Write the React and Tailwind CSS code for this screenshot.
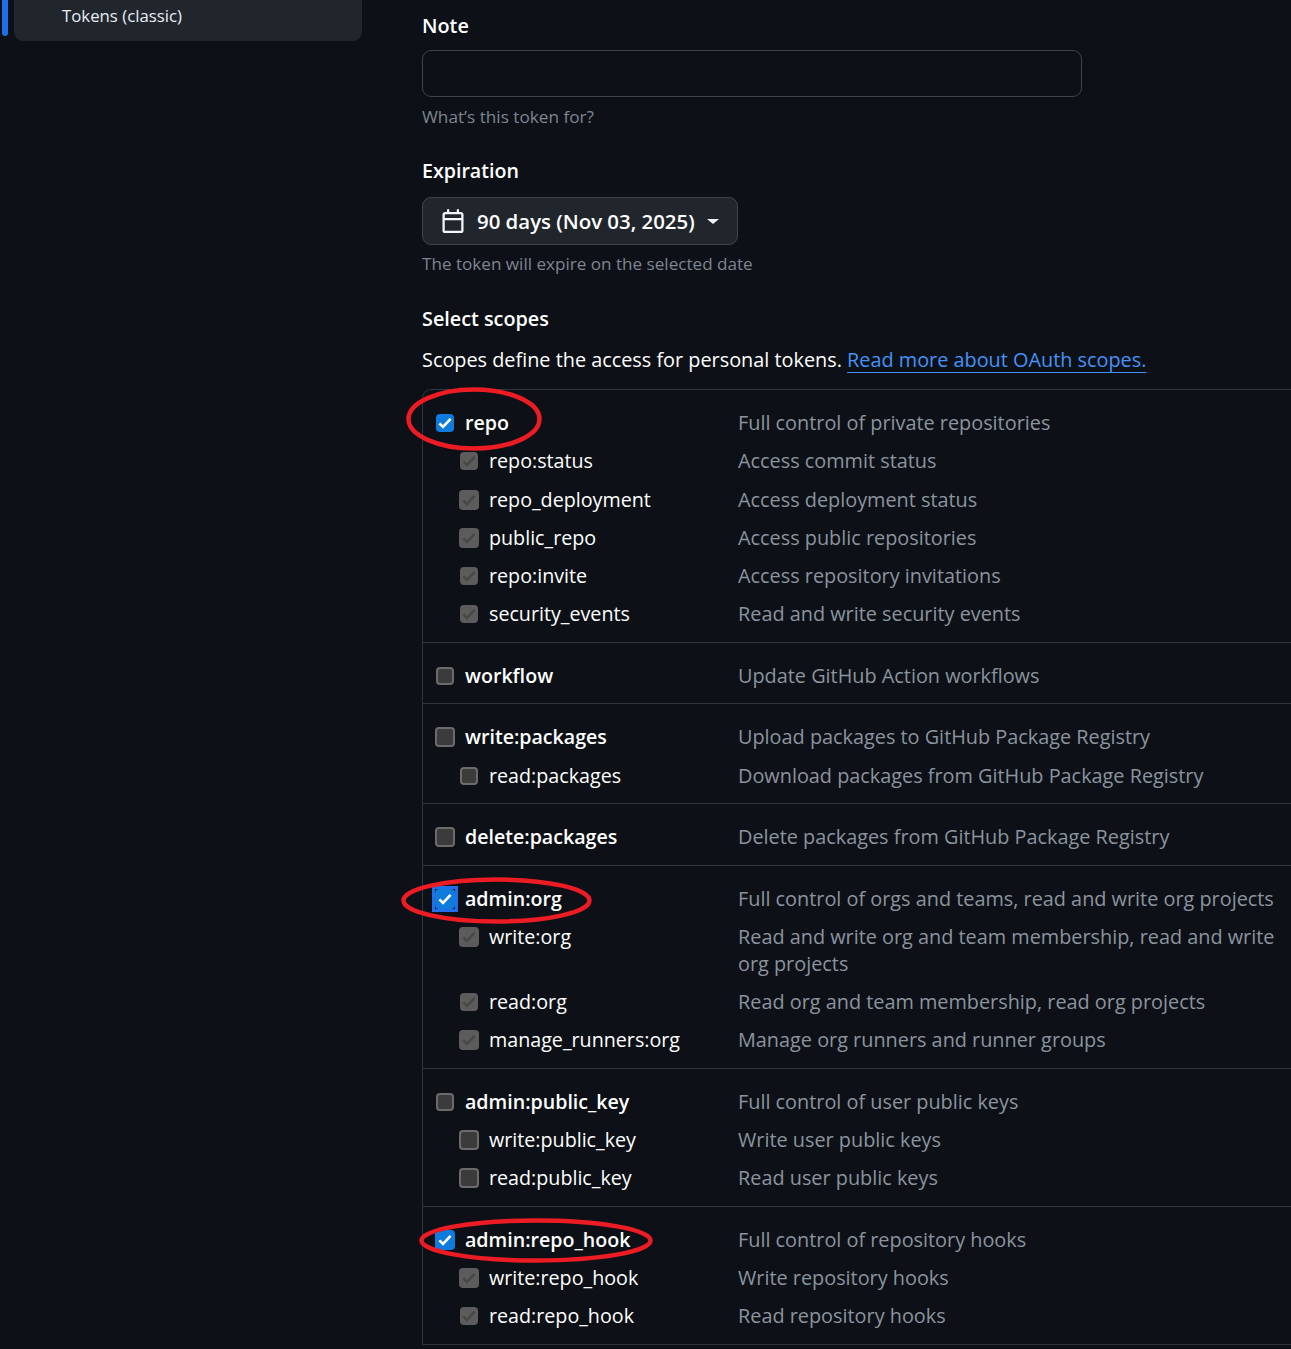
const groups = [
  { rows: [
    { name: "repo", desc: "Full control of private repositories", state: "on", ring: "repo" },
    { name: "repo:status", desc: "Access commit status", state: "off" },
    { name: "repo_deployment", desc: "Access deployment status", state: "off", big: true },
    { name: "public_repo", desc: "Access public repositories", state: "off", big: true },
    { name: "repo:invite", desc: "Access repository invitations", state: "off" },
    { name: "security_events", desc: "Read and write security events", state: "off" },
  ] },
  { rows: [{ name: "workflow", desc: "Update GitHub Action workflows", state: "empty" }] },
  { rows: [
    { name: "write:packages", desc: "Upload packages to GitHub Package Registry", state: "empty", big: true },
    { name: "read:packages", desc: "Download packages from GitHub Package Registry", state: "empty" },
  ] },
  { rows: [{ name: "delete:packages", desc: "Delete packages from GitHub Package Registry", state: "empty", big: true }] },
  { rows: [
    { name: "admin:org", desc: "Full control of orgs and teams, read and write org projects", state: "on", ring: "org", focus: true, big: true },
    { name: "write:org", desc: "Read and write org and team membership, read and write\norg projects", state: "off", big: true },
    { name: "read:org", desc: "Read org and team membership, read org projects", state: "off" },
    { name: "manage_runners:org", desc: "Manage org runners and runner groups", state: "off", big: true },
  ] },
  { rows: [
    { name: "admin:public_key", desc: "Full control of user public keys", state: "empty" },
    { name: "write:public_key", desc: "Write user public keys", state: "empty", big: true },
    { name: "read:public_key", desc: "Read user public keys", state: "empty", big: true },
  ] },
  { rows: [
    { name: "admin:repo_hook", desc: "Full control of repository hooks", state: "on", ring: "hook", big: true },
    { name: "write:repo_hook", desc: "Write repository hooks", state: "off", big: true },
    { name: "read:repo_hook", desc: "Read repository hooks", state: "off" },
  ] },
];

function Box({ state, focus, big }) {
  const size = big ? "h-[20px] w-[20px] -mx-[1px]" : "h-[18px] w-[18px]";
  if (state === "empty") {
    return <span className={`block rounded-[4px] border-2 border-[#6b6b6b] bg-[#3b3b3b] ${size}`} />;
  }
  const on = state === "on";
  return (
    <span className={`relative flex items-center justify-center rounded-[4px] ${size} ${on ? "bg-[#0f7bdc]" : "bg-[#5c5c5c]"}`}>
      {focus && <span className="absolute -inset-[3px] border-[3px] border-[#1f6feb]" />}
      <svg width="16" height="16" viewBox="0 0 16 16" fill="none" className="relative">
        <path d="M2.4 8.4 6 12 13.6 3.8" stroke={on ? "#ffffff" : "#484848"} strokeWidth="2.6" />
      </svg>
    </span>
  );
}

function Ring({ w, h, className }) {
  return (
    <svg width={w} height={h} viewBox={`0 0 ${w} ${h}`} fill="none" className={`pointer-events-none absolute ${className}`}>
      <ellipse cx={w / 2} cy={h / 2} rx={w / 2 - 2.5} ry={h / 2 - 2.5} stroke="#ed1c24" strokeWidth="4.5" />
    </svg>
  );
}

function Row({ row, child }) {
  return (
    <div className={`relative flex min-h-[38.2px] items-start ${child ? "pl-[37px]" : "pl-[13px]"}`}>
      <span className="flex h-[38.2px] items-center">
        <Box state={row.state} focus={row.focus} big={row.big} />
      </span>
      <span className={`ml-[11px] leading-[38.2px] text-white ${child ? "w-[249px] text-[19.7px] font-normal" : "w-[273px] text-[19.6px] font-semibold"}`}>{row.name}</span>
      <span className="whitespace-pre-line pb-[6px] pt-[5.2px] text-[19.85px] leading-[27px] text-[#8b949e]">{row.desc}</span>
      {row.ring === "repo" && <Ring w={136} h={64} className="left-[-17px] top-[-17px]" />}
      {row.ring === "org" && <Ring w={191} h={47} className="left-[-22px] top-[-3px]" />}
      {row.ring === "hook" && <Ring w={234} h={45} className="left-[-4px] top-[-3px]" />}
    </div>
  );
}

export default function App() {
  return (
    <div className="flex h-[1349px] w-full overflow-hidden bg-[#0d1117] font-['Open_Sans','Noto_Sans',sans-serif] text-[19.8px] text-white">
      <aside className="flex w-[422px] shrink-0 items-start">
        <div className="ml-[2px] h-[36px] w-[6px] rounded-b-[4px] bg-[#1f6feb]" />
        <div className="ml-[6px] flex h-[41px] w-[348px] items-center rounded-b-[9px] bg-[#21262d] pb-[9px] pl-[48px] text-[16.8px] text-[#e6edf3]">
          Tokens (classic)
        </div>
      </aside>
      <main className="w-[880px] shrink-0 pt-[12px]">
        <label className="block font-semibold leading-[27px]">Note</label>
        <div className="mt-[11px] h-[47px] w-[660px] rounded-[9px] border border-[#3d444d]" />
        <p className="mt-[6px] text-[17.2px] leading-[27px] text-[#7d8590]">What’s this token for?</p>
        <label className="mt-[27px] block text-[19.6px] font-semibold leading-[27px]">Expiration</label>
        <div className="mt-[13px] flex h-[48px] w-[316px] items-center rounded-[9px] border border-[#3d444d] bg-[#21262d] pl-[18px] text-[20.4px] font-semibold">
          <svg width="24" height="24" viewBox="0 0 16 16" fill="#f0f6fc">
            <path d="M4.75 0a.75.75 0 0 1 .75.75V2h5V.75a.75.75 0 0 1 1.5 0V2h1.25c.966 0 1.75.784 1.75 1.75v10.5A1.75 1.75 0 0 1 13.25 16H2.75A1.75 1.75 0 0 1 1 14.25V3.75C1 2.784 1.784 2 2.75 2H4V.75A.75.75 0 0 1 4.75 0ZM2.5 7.5v6.75c0 .138.112.25.25.25h10.5a.25.25 0 0 0 .25-.25V7.5Zm10.75-4H2.75a.25.25 0 0 0-.25.25V6h11V3.75a.25.25 0 0 0-.25-.25Z" />
          </svg>
          <span className="ml-[12px] whitespace-nowrap">90 days (Nov 03, 2025)</span>
          <span className="ml-auto mr-[18px] h-0 w-0 border-x-[6px] border-t-[5px] border-x-transparent border-t-[#f0f6fc]" />
        </div>
        <p className="mt-[5px] text-[17.1px] leading-[27px] text-[#7d8590]">The token will expire on the selected date</p>
        <h3 className="mt-[28px] font-semibold leading-[27px]">Select scopes</h3>
        <p className="mt-[14px] text-[19.85px] leading-[27px]">
          Scopes define the access for personal tokens.{" "}
          <a className="text-[#4493f8] underline underline-offset-[5px]">Read more about OAuth scopes.</a>
        </p>
        <div className="mt-[16px] rounded-tl-[9px] border-l border-t border-[#30363d]">
          {groups.map((g, i) => (
            <div key={i} className="border-b border-[#30363d] pb-[8.3px] pt-[14.1px]">
              {g.rows.map((r, j) => (
                <Row key={r.name} row={r} child={j > 0} />
              ))}
            </div>
          ))}
        </div>
      </main>
    </div>
  );
}
